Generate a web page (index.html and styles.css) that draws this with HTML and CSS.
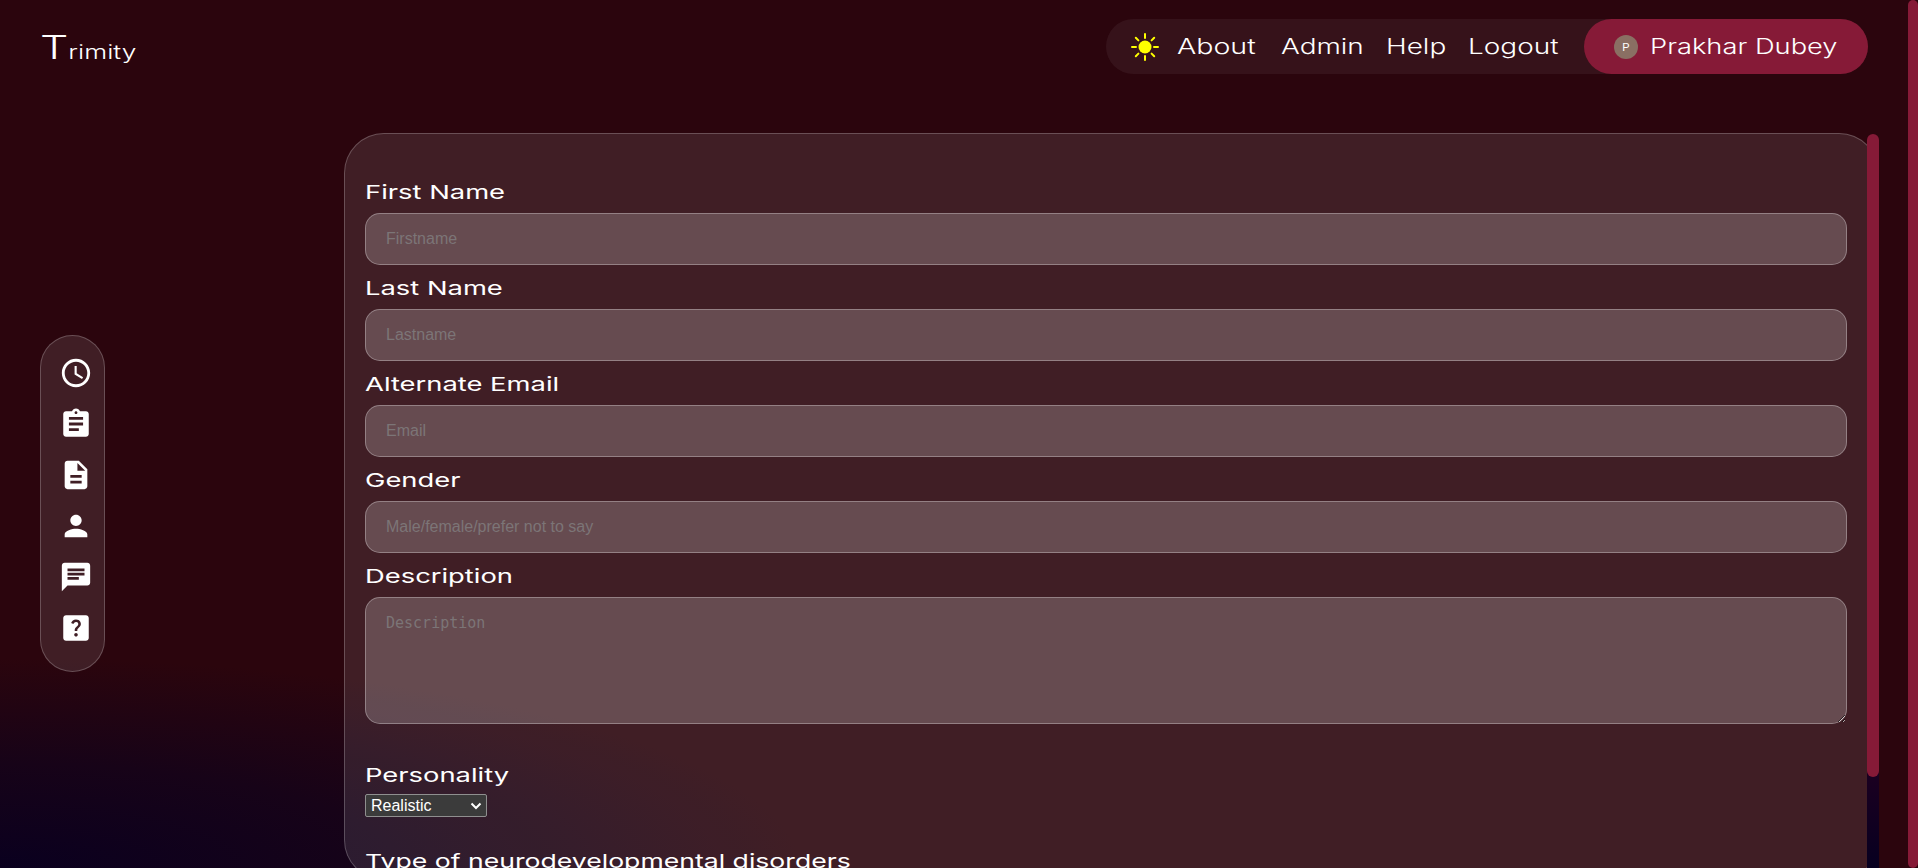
FILE: index.html
```html
<!DOCTYPE html>
<html lang="en">
<head>
<meta charset="utf-8">
<title>Trimity</title>
<link rel="stylesheet" href="styles.css">
</head>
<body>
<div class="page">
  <header class="topbar">
    <div class="logo"><span class="logo-text"><span class="logo-t">T</span>rimity</span></div>
    <nav class="nav">
      <svg class="sun" viewBox="0 0 28 28" aria-hidden="true"><circle cx="14" cy="14" r="6.5"/><g class="rays"><path d="M14 1v4M14 23v4M1 14h4M23 14h4M4.8 4.8l2.6 2.6M20.6 20.6l2.6 2.6M4.8 23.2l2.6-2.6M20.6 7.4l2.6-2.6"/></g></svg>
      <a class="link about"><span>About</span></a>
      <a class="link admin"><span>Admin</span></a>
      <a class="link help"><span>Help</span></a>
      <a class="link logout"><span>Logout</span></a>
      <div class="user">
        <span class="avatar">P</span>
        <span class="username"><span>Prakhar Dubey</span></span>
      </div>
    </nav>
  </header>
  <main class="main">
    <aside class="side">
      <div class="rail">
        <svg viewBox="0 0 24 24"><path d="M11.99 2C6.47 2 2 6.48 2 12s4.47 10 9.99 10C17.52 22 22 17.52 22 12S17.52 2 11.99 2zM12 20c-4.42 0-8-3.58-8-8s3.58-8 8-8 8 3.58 8 8-3.58 8-8 8zm.5-13H11v6l5.25 3.15.75-1.23-4.5-2.67z"/></svg>
        <svg viewBox="0 0 24 24"><path d="M19 3h-4.18C14.4 1.84 13.3 1 12 1c-1.3 0-2.4.84-2.82 2H5c-1.1 0-2 .9-2 2v14c0 1.1.9 2 2 2h14c1.1 0 2-.9 2-2V5c0-1.1-.9-2-2-2zm-7 0c.55 0 1 .45 1 1s-.45 1-1 1-1-.45-1-1 .45-1 1-1zm2 14H7v-2h7v2zm3-4H7v-2h10v2zm0-4H7V7h10v2z"/></svg>
        <svg viewBox="0 0 24 24"><path d="M14 2H6c-1.1 0-1.99.9-1.99 2L4 20c0 1.1.89 2 1.99 2H18c1.1 0 2-.9 2-2V8l-6-6zm2 16H8v-2h8v2zm0-4H8v-2h8v2zm-3-5V3.5L18.5 9H13z"/></svg>
        <svg viewBox="0 0 24 24"><path d="M12 12c2.21 0 4-1.79 4-4s-1.79-4-4-4-4 1.79-4 4 1.79 4 4 4zm0 2c-2.67 0-8 1.34-8 4v2h16v-2c0-2.66-5.33-4-8-4z"/></svg>
        <svg viewBox="0 0 24 24"><path d="M20 2H4c-1.1 0-1.99.9-1.99 2L2 22l4-4h14c1.1 0 2-.9 2-2V4c0-1.1-.9-2-2-2zM6 9h12v2H6V9zm8 5H6v-2h8v2zm4-6H6V6h12v2z"/></svg>
        <svg viewBox="0 0 24 24"><path d="M19 3H5c-1.1 0-2 .9-2 2v14c0 1.1.9 2 2 2h14c1.1 0 2-.9 2-2V5c0-1.1-.9-2-2-2zm-6.99 15c-.7 0-1.26-.56-1.26-1.26 0-.71.56-1.25 1.26-1.25.71 0 1.25.54 1.25 1.25-.01.69-.54 1.26-1.25 1.26zm3.01-7.4c-.76 1.11-1.48 1.46-1.87 2.17-.16.29-.22.48-.22 1.41h-1.82c0-.49-.08-1.29.31-1.98.49-.87 1.42-1.39 1.96-2.16.57-.81.25-2.33-1.37-2.33-1.06 0-1.58.8-1.8 1.48l-1.65-.7C9.01 7.15 10.22 6 11.99 6c1.48 0 2.49.67 3.01 1.52.44.72.7 2.07.02 3.08z"/></svg>
      </div>
    </aside>
    <section class="panel">
      <form class="card">
        <label class="label"><span>First Name</span></label>
        <input class="field" type="text" placeholder="Firstname">
        <label class="label"><span>Last Name</span></label>
        <input class="field" type="text" placeholder="Lastname">
        <label class="label"><span>Alternate Email</span></label>
        <input class="field" type="text" placeholder="Email">
        <label class="label"><span>Gender</span></label>
        <input class="field" type="text" placeholder="Male/female/prefer not to say">
        <label class="label"><span>Description</span></label>
        <textarea class="area" placeholder="Description"></textarea>
        <label class="label label-gap"><span>Personality</span></label>
        <div class="pick-wrap">
          <select class="pick"><option>Realistic</option></select>
          <svg class="chevron" viewBox="0 0 12 8" aria-hidden="true"><path d="M1.5 1.5 6 6l4.5-4.5"/></svg>
        </div>
        <label class="label label-gap2"><span class="label-long">Type of neurodevelopmental disorders</span></label>
      </form>
      <div class="track"><div class="thumb"></div></div>
    </section>
  </main>
  <div class="page-thumb"></div>
</div>
</body>
</html>
```
FILE: styles.css
```css
* { box-sizing: border-box; }
html, body { margin: 0; height: 100%; overflow: hidden; }
body {
  background: radial-gradient(ellipse 800px 210px at 0 100%, #0a001f 0%, #170318 50%, #2b050d 100%), #2b050d;
  color: #fff;
  font-family: Inter, "Liberation Sans", sans-serif;
}
.page { position: relative; height: 868px; overflow: hidden; }
.topbar { display: flex; justify-content: space-between; align-items: flex-start; height: 133px; padding: 19px 50px 0 40px; }
.logo { height: 55px; display: flex; align-items: center; }
.logo-text { display: inline-block; width: 96px; font-size: 19.5px; font-weight: 300; transform: scaleX(1.35); transform-origin: left; white-space: nowrap; }
.logo-t { font-size: 33px; font-weight: 300; }
.nav { display: flex; align-items: center; height: 55px; width: 762px; padding-left: 25px; border-radius: 28px; background: rgba(255,255,255,.055); }
.sun { width: 28px; height: 28px; margin-right: 18px; flex: none; }
.sun circle { fill: #ffff00; }
.rays path { stroke: #ffff00; stroke-width: 2; stroke-linecap: round; fill: none; }
.link { display: block; font-size: 21px; font-weight: 300; white-space: nowrap; }
.link span, .username span, .label span { display: inline-block; transform-origin: left; white-space: nowrap; }
.link span { transform: scaleX(1.33); }
.about { width: 104px; }
.about span { transform: scaleX(1.36); }
.admin { width: 105px; }
.help { width: 82px; }
.logout { width: 116px; }
.user { display: flex; align-items: center; gap: 12px; margin-left: auto; width: 284px; height: 55px; padding-left: 30px; border-radius: 28px; background: #861a37; }
.avatar { width: 24px; height: 24px; border-radius: 50%; background: #8a6f63; display: flex; align-items: center; justify-content: center; font-size: 11px; font-family: "Liberation Sans", sans-serif; }
.username { font-size: 21px; font-weight: 300; }
.username span { transform: scaleX(1.3); }
.main { display: grid; grid-template-columns: 344px 1535px; }
.side { padding: 202px 0 0 40px; }
.rail { width: 65px; height: 337px; padding: 20px 0 0 18px; display: flex; flex-direction: column; gap: 17px; border: 1px solid rgba(255,255,255,.22); border-radius: 33px; background: rgba(255,255,255,.1); }
.rail svg { width: 34px; height: 34px; fill: #fff; flex: none; }
.panel { position: relative; height: 747px; }
.card { height: 100%; padding: 37px 30px 0 20px; overflow: hidden; border: 1px solid rgba(255,255,255,.22); border-radius: 40px; background: rgba(255,255,255,.1); }
.label { display: flex; align-items: center; height: 42px; font-size: 19px; font-weight: 400; }
.label span { transform: scaleX(1.44); }
.label .label-long { transform: scaleX(1.40); }
.field, .area { display: block; width: 1482px; border: 1px solid rgba(255,255,255,.3); border-radius: 15px; background: rgba(255,255,255,.2); color: #fff; padding: 0 20px; margin-bottom: 2px; outline: none; }
.field { height: 52px; font: 16px "Liberation Sans", sans-serif; }
.area { height: 127px; padding-top: 16px; font: 15px "DejaVu Sans Mono", monospace; }
.field::placeholder, .area::placeholder { color: #7c7577; }
.label-gap { margin-top: 30px; }
.label-gap2 { margin-top: 23px; }
.pick-wrap { position: relative; width: 122px; height: 23px; margin-top: -2px; }
.pick { display: block; width: 100%; height: 100%; padding: 0 0 1px 5px; appearance: none; font: 16px "Liberation Sans", sans-serif; color: #fff; background: #3b3b3b; border: 1px solid #8f8f8f; border-radius: 2px; }
.chevron { position: absolute; top: 8px; right: 5px; width: 12px; height: 8px; fill: none; stroke: #fff; stroke-width: 2; }
.track { position: absolute; top: 1px; right: 0; width: 12px; height: 746px; background: linear-gradient(#2b050d 60%, #1a0020 86%, #050020); }
.thumb { height: 643px; border-radius: 6px; background: #861a37; }
.page-thumb { position: absolute; top: 0; right: 0; width: 10px; height: 868px; border-radius: 5px; background: #861a37; }
```
